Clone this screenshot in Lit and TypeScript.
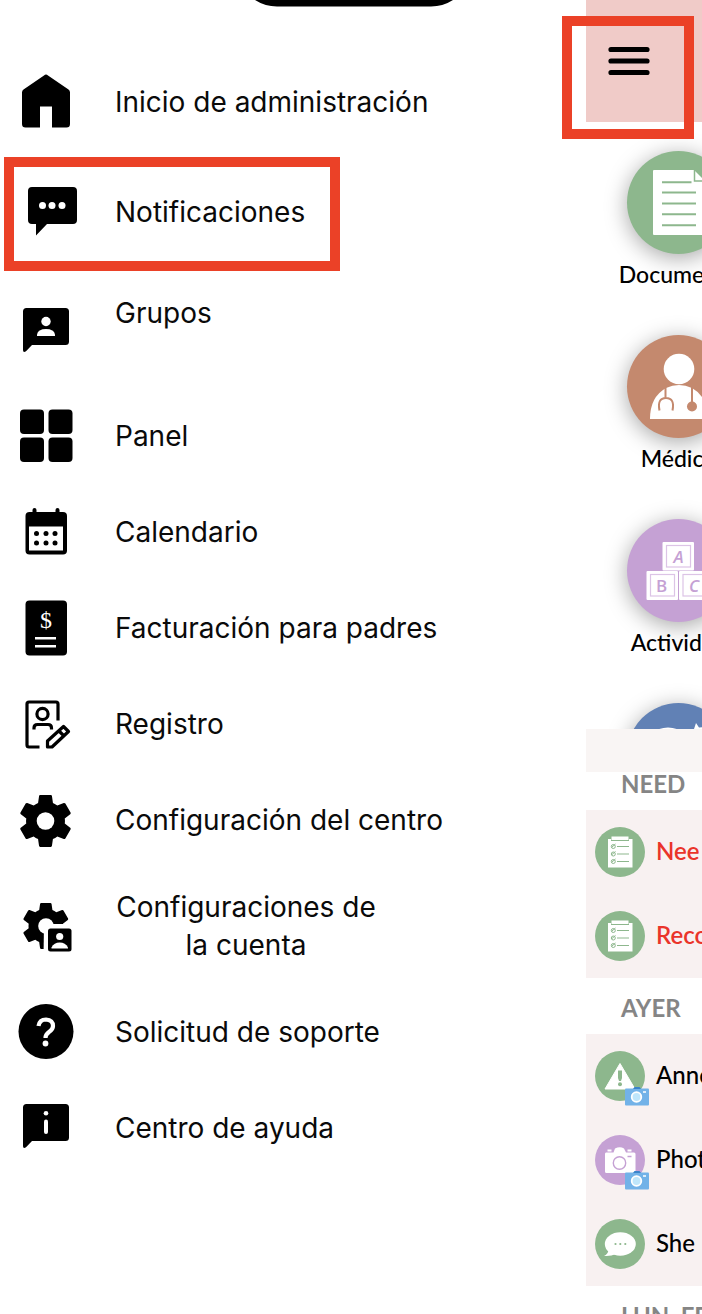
import { LitElement, html, svg, css, type SVGTemplateResult } from "lit";
import { customElement } from "lit/decorators.js";
import { classMap } from "lit/directives/class-map.js";

const GEAR =
  "M19.14,12.94c0.04-0.3,0.06-0.61,0.06-0.94c0-0.32-0.02-0.64-0.07-0.94l2.03-1.58c0.18-0.14,0.23-0.41,0.12-0.61l-1.92-3.32c-0.12-0.22-0.37-0.29-0.59-0.22l-2.39,0.96c-0.5-0.38-1.03-0.7-1.62-0.94L14.4,2.81c-0.04-0.24-0.24-0.41-0.48-0.41h-3.84c-0.24,0-0.43,0.17-0.47,0.41L9.25,5.35C8.66,5.59,8.12,5.92,7.63,6.29L5.24,5.33c-0.22-0.08-0.47,0-0.59,0.22L2.74,8.87C2.62,9.08,2.66,9.34,2.86,9.48l2.03,1.58C4.84,11.36,4.8,11.69,4.8,12s0.02,0.64,0.07,0.94l-2.03,1.58c-0.18,0.14-0.23,0.41-0.12,0.61l1.92,3.32c0.12,0.22,0.37,0.29,0.59,0.22l2.39-0.96c0.5,0.38,1.03,0.7,1.62,0.94l0.36,2.54c0.05,0.24,0.24,0.41,0.48,0.41h3.84c0.24,0,0.44-0.17,0.47-0.41l0.36-2.54c0.59-0.24,1.13-0.56,1.62-0.94l2.39,0.96c0.22,0.08,0.47,0,0.59-0.22l1.92-3.32c0.12-0.22,0.07-0.47-0.12-0.61L19.14,12.94z";

/* Menu icons, drawn on a 60 x 60 grid */
const menuIcons: Record<string, SVGTemplateResult> = {
  home: svg`<path d="M26 3.400q2-1.600 4 0L50.500 17.600q1.500 1.200 1.500 3V52q0 3.500-3.500 3.500H34V34.500H22V55.500H7.500Q4 55.500 4 52V20.600q0-1.800 1.500-3Z"/>`,
  chat: svg`<path d="M14 3H55q4 0 4 4V36q0 4-4 4H29L18 51.500V40H14q-4 0-4-4V7q0-4 4-4Z"/>
    <g fill="#fff"><circle cx="24.500" cy="21.500" r="3.500"/><circle cx="34" cy="21.500" r="3.500"/><circle cx="44" cy="21.500" r="3.500"/></g>`,
  groups: svg`<path d="M8.500 8H47.500Q51 8 51 11.500V41.500Q51 45 47.500 45H14L8 51.300Q5 53 5 50V11.500Q5 8 8.500 8Z"/>
    <g fill="#fff"><circle cx="28" cy="21.500" r="4.700"/><path d="M19 36V34.500Q20 29 28 29T37 34.500V36Z"/></g>`,
  panel: svg`<rect x="2" y="3.500" width="24" height="24.500" rx="4"/><rect x="30.500" y="3.500" width="24" height="24.500" rx="4"/>
    <rect x="2" y="31.500" width="24" height="24.500" rx="4"/><rect x="30.500" y="31.500" width="24" height="24.500" rx="4"/>`,
  calendar: svg`<rect x="7.500" y="10" width="41.500" height="42.500" rx="4"/><path d="M16.500 12V8M39.500 12V8" stroke="#000" stroke-width="4" stroke-linecap="round"/>
    <rect x="11" y="24.500" width="34" height="24" fill="#fff"/>
    <circle cx="18.500" cy="31.500" r="2.500"/><circle cx="28" cy="31.500" r="2.500"/><circle cx="37" cy="31.500" r="2.500"/>
    <circle cx="18.500" cy="41" r="2.500"/><circle cx="28" cy="41" r="2.500"/><circle cx="37" cy="41" r="2.500"/>`,
  invoice: svg`<rect x="7.500" y="2.500" width="41.500" height="55" rx="4"/>
    <path d="M17 40.300H38M17 48.300H38" stroke="#fff" stroke-width="2.400"/>
    <text class="dollar" x="28" y="30" text-anchor="middle" fill="#fff">$</text>`,
  register: svg`<g fill="none" stroke="#000" stroke-width="3.200" stroke-linejoin="round">
    <path d="M40 26.500V10Q40 8 38 8H11Q9 8 9 10V51Q9 53 11 53H21.500"/>
    <circle cx="24.500" cy="20" r="5.600"/><path d="M16 35.500V34Q16 30.500 19.500 30.500H30Q33.500 30.500 33.500 34V35.500"/>
    <path d="M29.500 53V47L45.500 32.500L50.500 37.500L34 53ZM41 37L45.500 41.500"/></g>`,
  gear: svg`<path transform="translate(-4.900 -1.400) scale(2.700)" d=${GEAR}/><circle cx="27.500" cy="31" r="8.800" fill="#fff"/>`,
  account: svg`<path transform="translate(-1 1.200) scale(2.400)" d=${GEAR}/><circle cx="28" cy="30" r="7.800" fill="#fff"/>
    <path d="M26 28H60V60H25.500Z" fill="#fff"/><rect x="30" y="32.500" width="23.500" height="23" rx="2.500"/>
    <g fill="#fff"><circle cx="41.700" cy="40.500" r="3.600"/><path d="M33.500 52.500V51.500Q36 46.500 41.700 46.500T50 51.500V52.500Z"/></g>`,
  help: svg`<circle cx="28" cy="29.500" r="27.500"/>
    <path d="M20.500 24Q21.500 17.500 28 17.500Q35 18 35 24Q35 27.500 31 30Q27.500 32.500 27.500 36" fill="none" stroke="#fff" stroke-width="4.200"/>
    <circle cx="27.500" cy="41.500" r="2.900" fill="#fff"/>`,
  info: svg`<path d="M8.500 6H47.500Q51 6 51 9.500V39.500Q51 43 47.500 43H14L8 49.300Q5 51 5 48V9.500Q5 6 8.500 6Z"/>
    <g fill="#fff"><circle cx="28" cy="15.300" r="2.300"/><rect x="26" y="21.500" width="4" height="14.500" rx="2"/></g>`,
};

/* Category icons, drawn on a 103 x 103 grid */
const tileIcons: Record<string, SVGTemplateResult> = {
  document: svg`<path d="M27 19H67L78 30V84H27Q26 84 26 83V20Q26 19 27 19Z" fill="#fff"/>
    <path d="M67.500 19V30H78" fill="none" stroke="#8db78d" stroke-width="1.500"/>
    <path d="M35 31.300H64.500M35 41.500H69M35 52.500H69M35 63.300H69M35 74.300H69" stroke="#8db78d" stroke-width="2"/>`,
  doctor: svg`<circle cx="52" cy="34" r="15.300" fill="#fff"/><path d="M23 84Q23 62 39 53Q52 47 65 53Q81 62 81 84Z" fill="#fff"/>
    <g fill="none" stroke="#c4896e" stroke-width="2"><path d="M38.500 52V63M32.500 75.500Q30 63 39 63T45.500 75.500"/><path d="M65 52V68"/></g>
    <circle cx="65" cy="71.500" r="5" fill="#c4896e"/>`,
  blocks: svg`<g fill="#fff"><rect x="35.500" y="23" width="31.500" height="28.500" rx="1"/><rect x="19.500" y="52" width="31.500" height="29" rx="1"/><rect x="52" y="52" width="31.500" height="29" rx="1"/></g>
    <g fill="none" stroke="#dcc4e6" stroke-width="1.200"><rect x="39.500" y="26.500" width="24" height="21.500"/><rect x="23.500" y="55.500" width="24" height="21.500"/><rect x="56" y="55.500" width="24" height="21.500"/></g>
    <g class="letters" fill="#c5a1d4" text-anchor="middle"><text class="slanted" x="51.500" y="43.500">A</text><text x="34.500" y="72.500">B</text><text class="slanted" x="67" y="72.500">C</text></g>`,
  night: svg`<ellipse cx="41" cy="37" rx="18" ry="12.500" fill="#fff"/><path d="M69 20L72 24.500L79 24L73 32L59 30L67 26Z" fill="#fff"/>`,
};

/* Feed icons, drawn on a 50 x 50 grid */
const feedIcons: Record<string, SVGTemplateResult> = {
  list: svg`<path d="M13 12H16V14H34V12H37.500V40.500H13Z" fill="#fff"/><rect x="16.500" y="9.500" width="17" height="3.500" fill="#fff"/>
    <g fill="none" stroke="#8db78d" stroke-width="1"><path d="M22 19.500H34M22 27H34M22 34.500H34"/>
    <circle cx="18.300" cy="19.500" r="2"/><circle cx="18.300" cy="27" r="2"/><circle cx="18.300" cy="34.500" r="2"/><path d="M17 20L20.500 17M17 27.500L20.500 24.500M17 35L20.500 32"/></g>`,
  warning: svg`<path d="M25 12.500L40 38H10Z" fill="#fff" stroke="#fff" stroke-linejoin="round"/>
    <path d="M23 19.500H27V27L26 30H24L23 27Z" fill="#8db78d"/><circle cx="25" cy="33.300" r="2" fill="#8db78d"/>`,
  photo: svg`<path d="M11 17.500H18.500L20 13.500Q25 11 29 13.500L31 17.500H39Q40.500 17.500 40.500 19V36.500Q40.500 38 39 38H11.500Q10 38 10 36.500V19Q10 17.500 11 17.500ZM12.500 14.500H16.500V16.500H12.500ZM32.500 14.500H36.500V16.500H32.500Z" fill="#fff"/>
    <circle cx="24.500" cy="28" r="6.200" fill="none" stroke="#c5a1d4" stroke-width="1.400"/><path d="M32.500 21.500H36.500" stroke="#c5a1d4" stroke-width="1.500"/>`,
  speech: svg`<ellipse cx="25.300" cy="25" rx="15.500" ry="11.800" fill="#fff"/><path d="M13.500 31Q13 35 9 37Q16 37.500 21 35Z" fill="#fff"/>
    <g fill="#8db78d"><circle cx="20.500" cy="25" r="1.100"/><circle cx="25.300" cy="25" r="1.100"/><circle cx="30.300" cy="25" r="1.100"/></g>`,
};

interface MenuEntry { icon: string; label: string; kind?: "marked" | "raised" | "tall" }

const menu: MenuEntry[] = [
  { icon: "home", label: "Inicio de administración" },
  { icon: "chat", label: "Notificaciones", kind: "marked" },
  { icon: "groups", label: "Grupos", kind: "raised" },
  { icon: "panel", label: "Panel" },
  { icon: "calendar", label: "Calendario" },
  { icon: "invoice", label: "Facturación para padres" },
  { icon: "register", label: "Registro" },
  { icon: "gear", label: "Configuración del centro" },
  { icon: "account", label: "Configuraciones de la cuenta", kind: "tall" },
  { icon: "help", label: "Solicitud de soporte" },
  { icon: "info", label: "Centro de ayuda" },
];

const tiles = [
  { icon: "document", tone: "green", label: "Documento" },
  { icon: "doctor", tone: "clay", label: "Médico" },
  { icon: "blocks", tone: "lilac", label: "Actividad" },
  { icon: "night", tone: "blue", label: "Siesta" },
];

const feed = [
  { title: "NEED", rows: [
    { icon: "list", tone: "green", label: "Nee", urgent: true, photo: false },
    { icon: "list", tone: "green", label: "Reco", urgent: true, photo: false },
  ] },
  { title: "AYER", rows: [
    { icon: "warning", tone: "green", label: "Anno", urgent: false, photo: true },
    { icon: "photo", tone: "lilac", label: "Phot", urgent: false, photo: true },
    { icon: "speech", tone: "green", label: "She", urgent: false, photo: false },
  ] },
  { title: "LUN, FE", rows: [] },
];

@customElement("side-menu")
export class SideMenu extends LitElement {
  static styles = css`
    :host { display: block; padding-top: 54px; }
    .row {
      display: flex; align-items: center; gap: 37px; box-sizing: border-box;
      min-height: 96px; padding-left: 18px; color: #0a0a0a; text-decoration: none;
      font: 400 28px/38px Inter, "Liberation Sans", sans-serif;
    }
    .icon { flex: none; width: 60px; height: 60px; }
    .marked {
      width: 336px; max-width: calc(100% - 4px); min-height: 114px; margin: 7px 0 0 4px;
      padding-left: 4px; border: 10px solid #eb4127;
    }
    .marked .label { padding-bottom: 4px; }
    .raised { min-height: 117px; }
    .raised .label { padding-bottom: 34px; }
    .tall { min-height: 116px; }
    .tall .label { width: 262px; text-align: center; }
    .dollar { font: 400 24px "Liberation Serif", serif; }
  `;
  render() {
    return html`<nav aria-label="Menú">
      ${menu.map(({ icon, label, kind }) => html`
        <a href="#${icon}" class=${classMap({ row: true, marked: kind === "marked", raised: kind === "raised", tall: kind === "tall" })}>
          <svg class="icon" viewBox="0 0 60 60" aria-hidden="true">${menuIcons[icon]}</svg>
          <span class="label">${label}</span>
        </a>`)}
    </nav>`;
  }
}

@customElement("home-screen")
export class HomeScreen extends LitElement {
  static styles = css`
    :host { display: block; white-space: nowrap; font-family: Lato, "Open Sans", sans-serif; }
    .bar { position: relative; display: flex; align-items: center; height: 122px; background: #f0cbc8; }
    .burger { display: flex; margin-left: 17px; padding: 5px; border: 0; background: none; }
    .mark { position: absolute; left: -24px; top: 16px; width: 132px; height: 123px; box-sizing: border-box; border: 10px solid #eb4127; z-index: 2; pointer-events: none; }
    .tiles { display: flex; flex-direction: column; max-height: 578px; padding: 29px 0 0 33px; overflow: hidden; }
    .tile { flex: none; display: flex; flex-direction: column; align-items: center; gap: 4px; width: 119px; height: 184px; color: #000; text-decoration: none; font-size: 23px; line-height: 32px; font-weight: 500; }
    .disc { flex: none; width: 103px; height: 103px; border-radius: 50%; box-shadow: 0 4px 22px rgba(0, 0, 0, 0.35); }
    .green { background: #8db78d; }
    .clay { background: #c4896e; }
    .lilac { background: #c5a1d4; }
    .blue { background: #6181b5; }
    .letters { font: 600 17px "Open Sans", sans-serif; }
    .slanted { font-style: italic; }
    .divider { position: relative; height: 43px; background: #f9f5f4; }
    .title { display: flex; align-items: end; box-sizing: border-box; height: 56px; margin: 0; padding: 0 0 12px 35px; color: #858585; font-size: 24px; line-height: 28px; font-weight: 700; }
    .divider + .title { height: 38px; }
    .list { margin: 0; padding: 0; list-style: none; background: #f8f1f1; }
    .item { display: flex; align-items: center; gap: 11px; height: 84px; padding-left: 9px; font-size: 24px; line-height: 28px; font-weight: 500; color: #000; }
    .label { padding-bottom: 2px; }
    .urgent { color: #ea342a; font-weight: 600; }
    .avatar { position: relative; flex: none; width: 50px; height: 50px; border-radius: 50%; }
    .badge { position: absolute; right: -4px; bottom: -5px; width: 24px; height: 20px; }
  `;
  render() {
    return html`
      <header class="bar">
        <button class="burger" aria-label="Abrir menú">
          <svg width="42" height="30" viewBox="0 0 42 30"><path d="M3 3.500H39M3 15H39M3 26.500H39" stroke="#000" stroke-width="5.200" stroke-linecap="round"/></svg>
        </button>
        <span class="mark"></span>
      </header>
      <nav class="tiles">
        ${tiles.map((t) => html`<a class="tile" href="#${t.icon}">
          <svg class="disc ${t.tone}" viewBox="0 0 103 103" aria-hidden="true">${tileIcons[t.icon]}</svg>
          <span>${t.label}</span></a>`)}
      </nav>
      <div class="divider"></div>
      ${feed.map((group) => html`
        <h2 class="title">${group.title}</h2>
        <ul class="list">
          ${group.rows.map((r) => html`<li class=${classMap({ item: true, urgent: r.urgent })}>
            <span class="avatar ${r.tone}">
              <svg viewBox="0 0 50 50" aria-hidden="true">${feedIcons[r.icon]}</svg>
              ${r.photo ? html`<svg class="badge" viewBox="0 0 24 20" aria-hidden="true">
                <rect y="2.500" width="24" height="17" rx="1" fill="#72b2e8"/><path d="M8 3L9.500 1H14.500L16 3Z" fill="#3a84cb"/>
                <circle cx="11.500" cy="11" r="4.800" fill="#bfe6fb" stroke="#fff" stroke-width="1.800"/><path d="M18 6H21" stroke="#fff" stroke-width="1.500"/></svg>` : null}
            </span>
            <span class="label">${r.label}</span></li>`)}
        </ul>`)}`;
  }
}

@customElement("app-root")
export class AppRoot extends LitElement {
  static styles = css`
    :host { display: grid; grid-template-columns: minmax(0, 1fr) 116px; position: relative; height: 100vh; overflow: hidden; background: #fff; }
    .cutout { position: absolute; top: 0; left: 255px; width: 198px; height: 7px; }
  `;
  render() {
    return html`
      <svg class="cutout" viewBox="0 0 198 7" aria-hidden="true"><path d="M0 0Q10 6.500 22 6.500H176Q188 6.500 198 0Z"/></svg>
      <side-menu></side-menu>
      <home-screen></home-screen>`;
  }
}
